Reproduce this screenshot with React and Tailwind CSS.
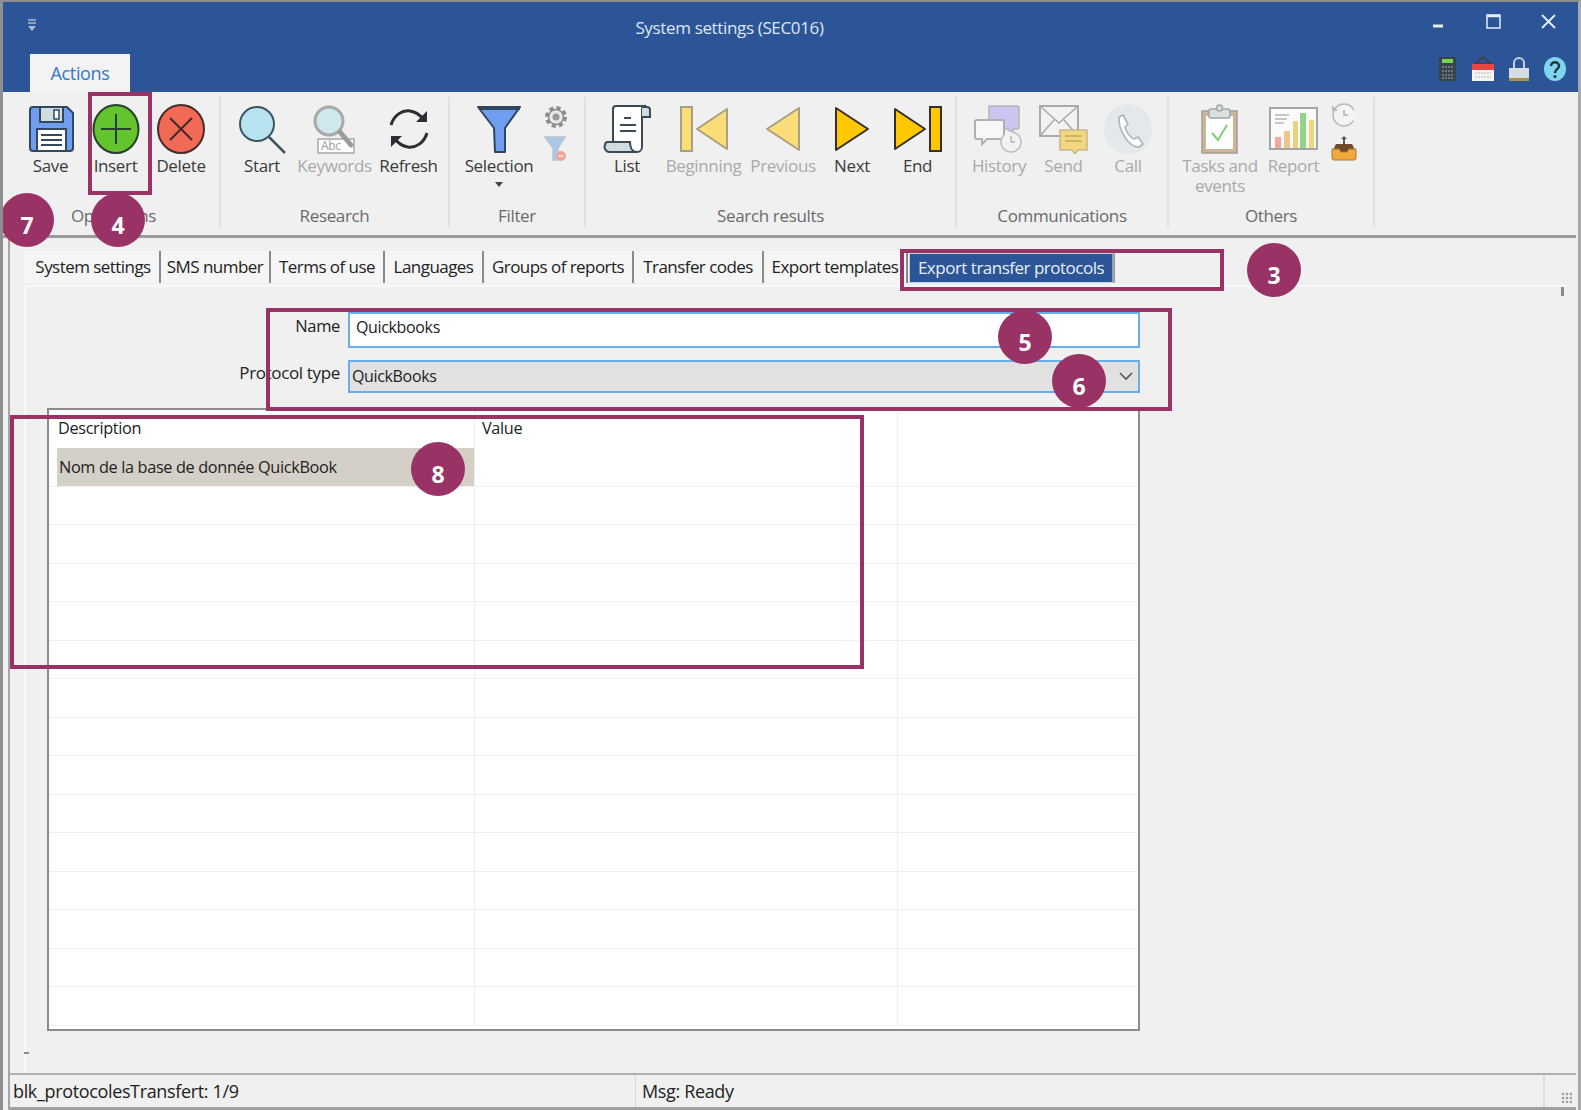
import React from "react";

const Save = () => (
  <svg width="48" height="48" viewBox="0 0 48 48">
    <path d="M3 5a3 3 0 0 1 3-3h34l6 6v35a3 3 0 0 1-3 3H6a3 3 0 0 1-3-3z" fill="#6f9ef0" stroke="#33475f" strokeWidth="2" />
    <rect x="13" y="2" width="23" height="15" fill="#cfdde0" stroke="#33475f" strokeWidth="2" />
    <rect x="27" y="5" width="5" height="9" fill="#fff" stroke="#33475f" strokeWidth="1.5" />
    <rect x="10" y="24" width="29" height="22" fill="#fff" stroke="#33475f" strokeWidth="2" />
    <path d="M14 30h21M14 35h21M14 40h21" stroke="#33475f" strokeWidth="1.8" />
  </svg>
);
const Insert = () => (
  <svg width="48" height="50" viewBox="0 0 48 50">
    <ellipse cx="24" cy="25" rx="22.5" ry="24" fill="#63c42d" stroke="#27402a" strokeWidth="2" />
    <path d="M24 10v30M9 25h30" stroke="#27402a" strokeWidth="2" />
  </svg>
);
const Delete = () => (
  <svg width="50" height="50" viewBox="0 0 50 50">
    <ellipse cx="25" cy="25" rx="23" ry="24" fill="#f26a55" stroke="#4a2a2a" strokeWidth="2" />
    <path d="M14 14l22 22M36 14L14 36" stroke="#3f2a2a" strokeWidth="2" />
  </svg>
);
const Start = () => (
  <svg width="50" height="50" viewBox="0 0 50 50">
    <circle cx="20" cy="20" r="17" fill="#b7e4f0" stroke="#3e5560" strokeWidth="2" />
    <path d="M32 33l16 16" stroke="#3e5560" strokeWidth="2.5" />
  </svg>
);
const Keywords = () => (
  <svg width="48" height="50" viewBox="0 0 48 50">
    <circle cx="18" cy="17" r="14" fill="#cfe8ee" stroke="#a9a9a9" strokeWidth="3" />
    <rect x="7" y="35" width="36" height="14" fill="#fff" stroke="#b5b5b5" strokeWidth="1.8" />
    <text x="10" y="46" fontSize="12" fill="#9c9c9c" fontFamily="Open Sans, sans-serif">Abc</text>
    <path d="M29 28l11 13" stroke="#9c9c9c" strokeWidth="5" strokeLinecap="round" />
  </svg>
);
const Refresh = () => (
  <svg width="46" height="46" viewBox="0 0 46 46" fill="none">
    <path d="M5 19C8 9 16 4 24 5c6 1 10 4 13 8" stroke="#2b2f33" strokeWidth="3" />
    <path d="M41 5v11H30z" fill="#2b2f33" />
    <path d="M41 27c-3 10-11 15-19 14-6-1-10-4-13-8" stroke="#2b2f33" strokeWidth="3" />
    <path d="M5 41V30h11z" fill="#2b2f33" />
  </svg>
);
const Funnel = () => (
  <svg width="46" height="50" viewBox="0 0 46 50">
    <path d="M2 3h42L29 24v24H19l-1-24z" fill="#6f9ef0" stroke="#2f4660" strokeWidth="2" strokeLinejoin="round" />
    <path d="M2 3h42v3H4z" fill="#2f4660" />
  </svg>
);
const Gear = () => (
  <svg width="26" height="26" viewBox="0 0 26 26" fill="none">
    <circle cx="13" cy="13" r="9" fill="#e8e8e8" stroke="#8c8c8c" strokeWidth="4" strokeDasharray="4 3.1" />
    <circle cx="13" cy="13" r="7.5" stroke="#8c8c8c" strokeWidth="1.5" />
    <circle cx="13" cy="13" r="3.5" fill="#9a9a9a" />
  </svg>
);
const SmallFunnel = () => (
  <svg width="24" height="28" viewBox="0 0 24 28">
    <path d="M1 2h20l-7 11v12H9V13z" fill="#a9c9ea" stroke="#b8c3cc" strokeWidth="1.5" />
    <circle cx="17" cy="21" r="5" fill="#efa39a" />
    <path d="M14.5 21h5" stroke="#fff" strokeWidth="1.2" />
  </svg>
);
const List = () => (
  <svg width="48" height="50" viewBox="0 0 48 50">
    <path d="M10 39V5a3 3 0 0 1 3-3h30a3 3 0 0 0-4 3v38a5 5 0 0 1-5 5" fill="#fff" stroke="#3d4a54" strokeWidth="2" />
    <path d="M39 3h5a3 3 0 0 1 3 3v7h-8" fill="#cfdde0" stroke="#3d4a54" strokeWidth="2" />
    <path d="M2 41a3 3 0 0 1 3-3h22c0 5 2 10 7 10H7a5 5 0 0 1-5-7z" fill="#cfdde0" stroke="#3d4a54" strokeWidth="2" />
    <path d="M21 14h7M17 21h16M17 27h16" stroke="#3d4a54" strokeWidth="1.8" />
  </svg>
);
const Beginning = () => (
  <svg width="48" height="46" viewBox="0 0 48 46">
    <rect x="1" y="1" width="11" height="44" fill="#fbdd78" stroke="#a89f84" strokeWidth="2" />
    <path d="M17 23L47 3v40z" fill="#fbdd78" stroke="#a89f84" strokeWidth="2" strokeLinejoin="round" />
  </svg>
);
const Previous = () => (
  <svg width="36" height="46" viewBox="0 0 36 46">
    <path d="M2 23L34 2v42z" fill="#fbdd78" stroke="#a89f84" strokeWidth="2" strokeLinejoin="round" />
  </svg>
);
const Next = () => (
  <svg width="36" height="46" viewBox="0 0 36 46">
    <path d="M34 23L2 2v42z" fill="#ffc800" stroke="#33302a" strokeWidth="2" strokeLinejoin="round" />
  </svg>
);
const End = () => (
  <svg width="48" height="46" viewBox="0 0 48 46">
    <rect x="36" y="1" width="11" height="44" fill="#ffc800" stroke="#33302a" strokeWidth="2" />
    <path d="M31 23L1 3v40z" fill="#ffc800" stroke="#33302a" strokeWidth="2" strokeLinejoin="round" />
  </svg>
);
const History = () => (
  <svg width="50" height="50" viewBox="0 0 50 50">
    <path d="M15 2h28a2 2 0 0 1 2 2v19a2 2 0 0 1-2 2h-4v4l-6-4H15z" fill="#cdc4f2" stroke="#b5b5b5" strokeWidth="1.5" />
    <path d="M3 16h25a2 2 0 0 1 2 2v15a2 2 0 0 1-2 2H13l-5 5v-5H3a2 2 0 0 1-2-2V18a2 2 0 0 1 2-2z" fill="#f7f7f7" stroke="#b0b0b0" strokeWidth="2" />
    <circle cx="37" cy="38" r="10" fill="#f2f2f2" stroke="#bdbdbd" strokeWidth="1.5" strokeDasharray="40 8" />
    <path d="M37 32v6h4" stroke="#b5b5b5" strokeWidth="1.5" fill="none" />
  </svg>
);
const Send = () => (
  <svg width="50" height="50" viewBox="0 0 50 50">
    <rect x="1" y="2" width="38" height="30" fill="#f2f2f2" stroke="#a9a9a9" strokeWidth="2" />
    <path d="M1 2l19 17L39 2M1 32l14-16M39 32L25 16" stroke="#a9a9a9" strokeWidth="1.5" fill="none" />
    <path d="M21 26h27v20h-9l-3 4-3-4H21z" fill="#f2d680" stroke="#c8b78a" strokeWidth="1.5" />
    <path d="M26 32h17M26 37h17" stroke="#c4ac62" strokeWidth="1.5" />
  </svg>
);
const Call = () => (
  <svg width="48" height="50" viewBox="0 0 48 50">
    <ellipse cx="24" cy="25" rx="24" ry="25" fill="#e3e9ea" />
    <path d="M15 13l4-2 5 9-3 3c1 5 5 10 9 12l4-2 5 7-4 3c-9 1-21-16-20-30z" fill="#fff" stroke="#adb5b8" strokeWidth="1.6" strokeLinejoin="round" />
  </svg>
);
const Tasks = () => (
  <svg width="38" height="50" viewBox="0 0 38 50">
    <rect x="1" y="7" width="35" height="42" fill="#cdb59a" stroke="#a89d8f" strokeWidth="1.5" />
    <rect x="5" y="12" width="27" height="33" fill="#fff" />
    <rect x="8" y="5" width="21" height="9" rx="2" fill="#d7e0e2" stroke="#a5a5a5" strokeWidth="1.5" />
    <circle cx="18.5" cy="4" r="3" fill="#d7e0e2" stroke="#a5a5a5" strokeWidth="1.5" />
    <path d="M11 29l6 7 9-15" fill="none" stroke="#7fd07a" strokeWidth="2" />
  </svg>
);
const Report = () => (
  <svg width="50" height="44" viewBox="0 0 50 44">
    <rect x="1" y="1" width="47" height="41" fill="#fafafa" stroke="#a5a5a5" strokeWidth="2" />
    <path d="M6 8h14M6 12h12M6 16h9" stroke="#b5b5b5" strokeWidth="1.5" />
    <rect x="6" y="30" width="6" height="11" fill="#f0a898" />
    <rect x="15" y="24" width="6" height="17" fill="#f3c48a" />
    <rect x="24" y="14" width="5" height="27" fill="#ecd07c" />
    <rect x="31" y="6" width="6" height="35" fill="#94d48a" />
    <rect x="40" y="13" width="5" height="28" fill="#f0d77a" />
  </svg>
);
const Clock = () => (
  <svg width="26" height="26" viewBox="0 0 26 26" fill="none">
    <circle cx="13" cy="13" r="11" fill="#f4f4f4" stroke="#b9b9b9" strokeWidth="1.5" strokeDasharray="58 10" strokeDashoffset="-6" />
    <path d="M1 3v6h6z" fill="#b9b9b9" />
    <path d="M13 8v5h4" stroke="#b0b0b0" strokeWidth="1.5" />
  </svg>
);
const Tray = () => (
  <svg width="26" height="26" viewBox="0 0 26 26">
    <path d="M13 1l3 3h-2v6h-2V4h-2z" fill="#555" />
    <path d="M5 9h16l4 8H1z" fill="#6f4a2c" />
    <path d="M1 14h7l2 3h6l2-3h7v9a2 2 0 0 1-2 2H3a2 2 0 0 1-2-2z" fill="#f4a83c" stroke="#a87a3a" strokeWidth="1" />
  </svg>
);

const groups = [
  { label: "Operations", w: "w-[213px]", pl: "pl-[10px]", items: [
    { t: "Save", I: Save, w: "w-[65px]" }, { t: "Insert", I: Insert, w: "w-[65px]" }, { t: "Delete", I: Delete, w: "w-[66px]" },
  ]},
  { label: "Research", w: "w-[229px]", pl: "pl-[5px]", items: [
    { t: "Start", I: Start, w: "w-[72px]" }, { t: "Keywords", I: Keywords, off: true, w: "w-[73px]" }, { t: "Refresh", I: Refresh, w: "w-[75px]" },
  ]},
  { label: "Filter", w: "w-[136px]", pl: "pl-[5px]", filter: true, items: [] },
  { label: "Search results", w: "w-[371px]", pl: "pl-[8px]", items: [
    { t: "List", I: List, w: "w-[66px]" }, { t: "Beginning", I: Beginning, off: true, w: "w-[87px]" }, { t: "Previous", I: Previous, off: true, w: "w-[72px]" }, { t: "Next", I: Next, w: "w-[66px]" }, { t: "End", I: End, w: "w-[65px]" },
  ]},
  { label: "Communications", w: "w-[212px]", pl: "pl-[10px]", items: [
    { t: "History", I: History, off: true, w: "w-[64px]" }, { t: "Send", I: Send, off: true, w: "w-[65px]" }, { t: "Call", I: Call, off: true, w: "w-[64px]" },
  ]},
  { label: "Others", w: "w-[206px]", pl: "pl-[7px]", others: true, items: [
    { t: "Tasks and events", I: Tasks, off: true, w: "w-[88px]" }, { t: "Report", I: Report, off: true, w: "w-[59px]" },
  ]},
];

const tabs = [
  ["System settings", "w-[137px] pl-[3px]"], ["SMS number", "w-[110px]"], ["Terms of use", "w-[114px]"], ["Languages", "w-[99px]"],
  ["Groups of reports", "w-[150px]"], ["Transfer codes", "w-[130px]"], ["Export templates", "w-[144px]"],
];

function RibbonButton({ t, I, off, w }) {
  return (
    <div className={`${w} flex flex-col items-center`}>
      <div className="h-[54px] flex items-center justify-center"><I /></div>
      <div className={`text-center text-[17px] leading-[20px] ${off ? "text-[#a9a9a9]" : "text-[#3b3b3b]"}`}>{t}</div>
    </div>
  );
}

const Badge = ({ n, cls }) => (
  <div className={`absolute w-[54px] h-[54px] pt-[10px] rounded-full bg-[#993366] text-white font-bold text-[23px] flex items-center justify-center ${cls}`}>{n}</div>
);
const Box = ({ cls }) => <div className={`absolute border-[4px] border-[#993366] ${cls}`} />;

export default function App() {
  return (
    <div className="relative w-[1581px] h-[1110px] overflow-hidden flex flex-col bg-[#f0f0f0] border-t-2 border-x-[3px] border-[#8f8f8f] border-r-[#a9a9a9] tracking-[-0.35px] text-[#222]" style={{ fontFamily: '"Open Sans", sans-serif' }}>
      {/* Title bar */}
      <div className="bg-[#2b5597] h-[90px] shrink-0 flex flex-col">
        <div className="h-[52px] flex items-center relative">
          <div className="pl-[22px] w-[60px] pb-[6px]">
            <svg width="14" height="14" viewBox="0 0 14 14"><path d="M3 2h8M3 5h8" stroke="#aebbd0" strokeWidth="1.5" /><path d="M3 8h8l-4 5z" fill="#aebbd0" /></svg>
          </div>
          <div className="flex-1 text-center text-[17px] text-[#dfe6f1] pr-[33px]">System settings (SEC016)</div>
          <div className="flex items-center gap-[35px] pr-[19px] pb-[12px] text-white">
            <svg width="20" height="20" viewBox="0 0 20 20"><path d="M4 14h10" stroke="#e8edf5" strokeWidth="3" /></svg>
            <svg width="20" height="20" viewBox="0 0 20 20" fill="none"><rect x="3" y="3" width="13" height="13" stroke="#e8edf5" strokeWidth="1.5" /><path d="M3 4h13" stroke="#e8edf5" strokeWidth="2.5" /></svg>
            <svg width="20" height="20" viewBox="0 0 20 20"><path d="M3 3l13 13M16 3L3 16" stroke="#e8edf5" strokeWidth="1.8" /></svg>
          </div>
        </div>
        <div className="flex-1 flex items-end pl-[27px] pr-[11px] justify-between">
          <div className="w-[100px] h-[38px] bg-[#f3f3f3] text-[#2f78c8] text-[18px] flex items-center justify-center">Actions</div>
          <div className="flex items-center gap-[13px] pb-[10px]">
            <svg width="20" height="26" viewBox="0 0 20 26"><rect x="1" y="1" width="17" height="24" rx="1.5" fill="#39434a" /><rect x="4" y="3" width="11" height="4" fill="#7ad34c" /><path d="M4 11h11M4 15h11M4 19h11M4 22h11" stroke="#7c878e" strokeWidth="1.6" strokeDasharray="2 1" /></svg>
            <svg width="24" height="26" viewBox="0 0 24 26"><path d="M12 1L4 8h16z" fill="none" stroke="#4a3a40" strokeWidth="1.5" /><rect x="1" y="8" width="22" height="17" fill="#f4f4f4" /><rect x="1" y="8" width="22" height="6" fill="#e8453c" /><path d="M4 17h16M4 21h16" stroke="#c9c9c9" strokeWidth="1.6" strokeDasharray="2 1" /></svg>
            <svg width="22" height="26" viewBox="0 0 22 26" fill="none"><path d="M6 13V7a5 5 0 0 1 10 0v6" stroke="#c8d0d6" strokeWidth="2" /><rect x="1" y="12" width="20" height="11" fill="#d3dde2" /><rect x="1" y="22" width="20" height="3" fill="#a8914a" /></svg>
            <svg width="24" height="26" viewBox="0 0 24 26"><ellipse cx="12" cy="13" rx="11" ry="12" fill="#7fd4f2" /><path d="M8 10c0-5 8-5 8 0 0 3-4 3-4 7" fill="none" stroke="#26343c" strokeWidth="2.4" /><circle cx="12" cy="20.5" r="1.6" fill="#26343c" /></svg>
          </div>
        </div>
      </div>

      {/* Ribbon */}
      <div className="h-[146px] shrink-0 flex pl-[5px] pt-[5px] pb-[8px] mr-[2px] border-b-[3px] border-[#9a9a9a] bg-[#f0f0f0]">
        {groups.map((g) => (
          <div key={g.label} className={`${g.w} shrink-0 relative border-r-2 border-[#e0e0e0] flex flex-col`}>
            <div className={`${g.pl} flex-1 flex pt-[5px]`}>
              {g.filter && (
                <>
                  <div className="w-[88px] flex flex-col items-center">
                    <div className="h-[54px] flex items-center justify-center"><Funnel /></div>
                    <div className="text-[17px] leading-[20px] text-[#3b3b3b]">Selection</div>
                    <svg className="mt-[6px]" width="10" height="6" viewBox="0 0 10 6"><path d="M1 0h8L5 5z" fill="#444" /></svg>
                  </div>
                  <div className="flex flex-col items-center gap-[5px] pt-[2px]"><Gear /><SmallFunnel /></div>
                </>
              )}
              {g.items.map((it) => <RibbonButton key={it.t} {...it} />)}
              {g.others && (
                <div className="flex flex-col items-center gap-[7px] pl-[8px]"><Clock /><Tray /></div>
              )}
            </div>
            <div className="h-[22px] text-center text-[17px] leading-[22px] text-[#6a6a6a]">{g.label}</div>
          </div>
        ))}
      </div>

      {/* Body */}
      <div className="flex-1 flex flex-col min-h-0 border-l-[2px] border-[#a5a5a5] ml-[5px] mr-[2px]">
        <div className="h-[47px] shrink-0 flex items-end pl-[14px]">
          {tabs.map(([t, w]) => (
            <div key={t} className={`${w} h-[32px] mb-[2px] bg-[#f5f5f5] border-r-2 border-[#8a8a8a] flex items-center justify-center text-[17px] tracking-[-0.55px] whitespace-nowrap`}>{t}</div>
          ))}
          <div className="w-[206px] ml-[1px] h-[30px] mb-[2px] bg-[#2b5597] border border-[#c8d4e6] border-r-[3px] border-r-[#9aa0a8] text-[#e9eef6] text-[17px] tracking-[-0.5px] flex items-center justify-center whitespace-nowrap">Export transfer protocols</div>
        </div>
        <div className="flex-1 min-h-0 relative ml-[14px] mr-[10px] border-l-2 border-t-2 border-[#f8f8f8] pt-[25px]">
          <div className="w-[1114px]">
            <div className="flex items-start h-[48px]">
              <div className="w-[322px] text-right pr-[8px] text-[16.5px] pt-[2px]">Name</div>
              <div className="flex-1 h-[36px] bg-white border-2 border-[#69ade9] flex items-center px-[6px] pb-[7px] text-[16px]">Quickbooks</div>
            </div>
            <div className="flex items-start h-[48px]">
              <div className="w-[322px] text-right pr-[8px] text-[17px] pt-[0px]">Protocol type</div>
              <div className="flex-1 h-[33px] bg-[#e1e1e1] border-2 border-[#69ade9] flex items-center justify-between pl-[2px] pr-[4px] pb-[2px] text-[16px]">
                <span>QuickBooks</span>
                <svg width="16" height="16" viewBox="0 0 16 16" fill="none"><path d="M2 5l6 6 6-6" stroke="#555" strokeWidth="1.6" /></svg>
              </div>
            </div>
            <div className="ml-[21px] h-[623px] bg-white border-2 border-[#8c8c8c] overflow-hidden">
              <div className="h-[38px] flex text-[16.3px]">
                <div className="w-[425px] pl-[9px] pt-[6px]">Description</div>
                <div className="w-[423px] pl-[7px] pt-[6px] border-l border-[#eeeeee]">Value</div>
                <div className="flex-1 border-l border-[#eeeeee]" />
              </div>
              {Array.from({ length: 15 }).map((_, i) => (
                <div key={i} className="h-[38.5px] flex border-b border-[#f0f0f0] text-[16.3px]">
                  <div className={`w-[425px] ${i === 0 ? "ml-[8px] !w-[417px] bg-[#d4d0c8] pl-[2px] flex items-center whitespace-nowrap" : ""}`}>{i === 0 ? "Nom de la base de donnée QuickBook" : ""}</div>
                  <div className="w-[423px] border-l border-[#eeeeee]" />
                  <div className="flex-1 border-l border-[#eeeeee]" />
                </div>
              ))}
            </div>
          </div>
          <div className="absolute right-[2px] top-[0px] w-[3px] h-[9px] bg-[#8a8a8a]" />
          <div className="absolute left-[-2px] bottom-[19px] w-[5px] h-[2px] bg-[#8a8a8a]" />
        </div>
        <div className="h-[37px] shrink-0 flex items-center border-t-2 border-[#b0b0b0] border-b-[3px] border-b-[#a0a0a0] text-[18px] relative bg-[#f0f0f0]">
          <div className="w-[626px] pl-[3px] pt-[1px] h-full flex items-center border-r border-[#d8d8d8] whitespace-nowrap">blk_protocolesTransfert: 1/9</div>
          <div className="flex-1 pl-[6px] pt-[1px]">Msg: Ready</div>
          <div className="w-[33px] h-full border-l-2 border-[#dedede] relative">
            <div className="absolute right-[4px] bottom-[4px] w-[11px] h-[11px] bg-[radial-gradient(circle,#a0a0a0_1.5px,transparent_1.6px)] bg-[length:4px_4px]" />
          </div>
        </div>
      </div>

      {/* Annotations */}
      <Box cls="left-[85px] top-[90px] w-[64px] h-[103px]" />
      <Box cls="left-[897px] top-[247px] w-[324px] h-[42px]" />
      <Box cls="left-[263px] top-[306px] w-[906px] h-[103px]" />
      <Box cls="left-[7px] top-[413px] w-[854px] h-[254px]" />
      <Badge n="7" cls="left-[-3px] top-[191px]" />
      <Badge n="4" cls="left-[88px] top-[191px]" />
      <Badge n="3" cls="left-[1244px] top-[241px]" />
      <Badge n="5" cls="left-[995px] top-[308px]" />
      <Badge n="6" cls="left-[1049px] top-[352px]" />
      <Badge n="8" cls="left-[408px] top-[440px]" />
    </div>
  );
}
